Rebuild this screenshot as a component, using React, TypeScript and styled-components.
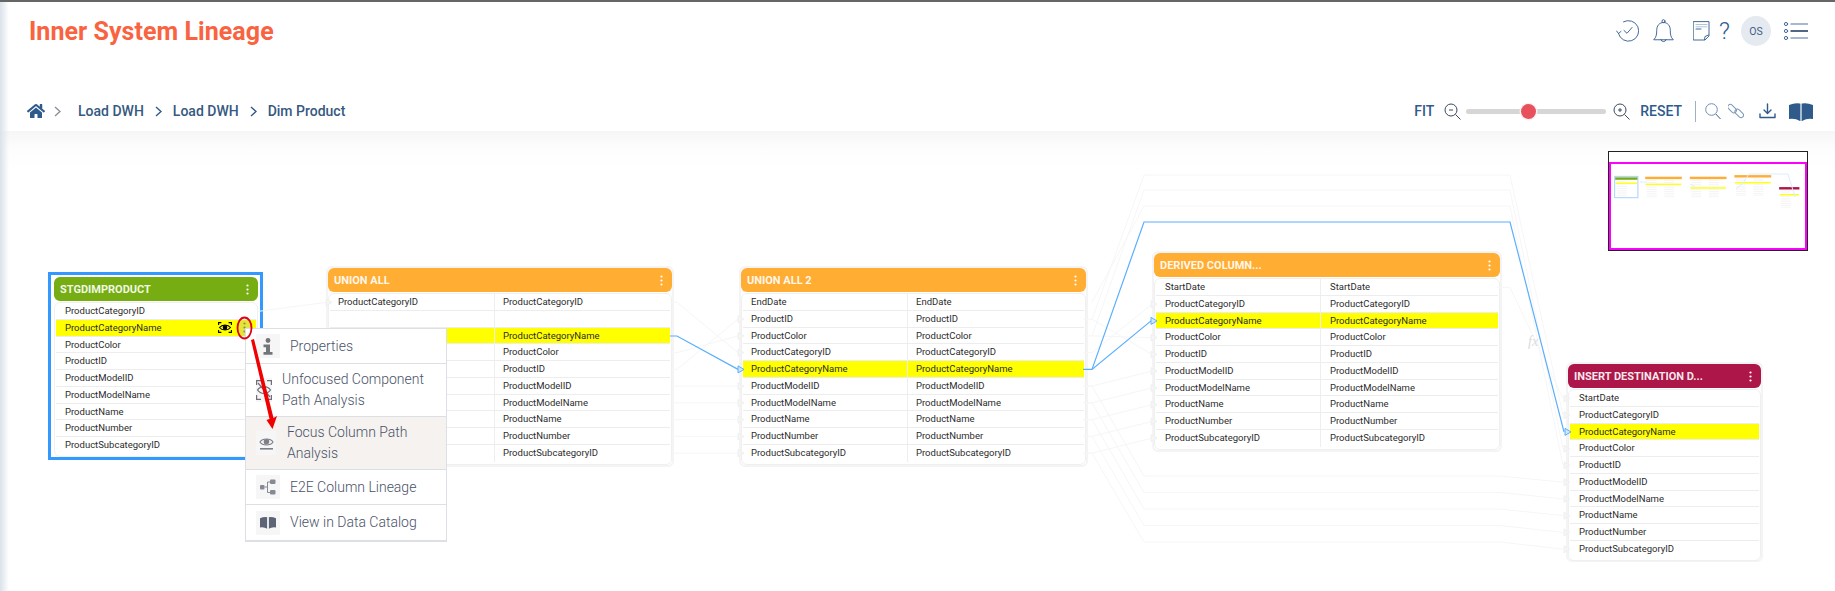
import React from "react";
import styled, { createGlobalStyle } from "styled-components";
import { FaHome } from "react-icons/fa";

const GlobalStyle = createGlobalStyle`
  html, body { margin: 0; padding: 0; background: #fff; }
  body { font-family: Roboto, "Liberation Sans", sans-serif; overflow: hidden; }
`;

const CANVAS_TOP = 131;
const ROW_H = 16.75;
const navy = "#2f5a8c";

const Page = styled.div`
  position: relative;
  width: 1835px;
  height: 591px;
  display: flex;
  flex-direction: column;
  border-top: 2px solid #666;
  box-sizing: border-box;
  overflow: hidden;
  &::after {
    content: "";
    position: absolute;
    left: 0;
    top: 0;
    bottom: 0;
    width: 9px;
    background: linear-gradient(90deg, #dbe2ea, rgba(240, 243, 247, 0));
    pointer-events: none;
  }
`;

const TopBar = styled.header`
  height: 73px;
  display: flex;
  justify-content: space-between;
  align-items: flex-start;
  padding: 15px 27px 0 29px;
  box-sizing: border-box;
`;

const Title = styled.h1`
  margin: 0;
  font-size: 25px;
  line-height: 30px;
  font-weight: 700;
  letter-spacing: 0.05px;
  color: #f9633f;
`;

const TopIcons = styled.div`
  display: flex;
  align-items: center;
  height: 30px;
  margin-top: -1px;
`;

const IconSlot = styled.span<{ $gap?: number }>`
  display: inline-flex;
  margin-left: ${({ $gap }) => $gap ?? 0}px;
`;

const Help = styled.span`
  margin-left: 9px;
  font-size: 24px;
  font-weight: 300;
  color: ${navy};
  width: 10px;
`;

const Avatar = styled.span`
  width: 30px;
  height: 30px;
  margin-left: 12px;
  border-radius: 50%;
  background: #e5e9f0;
  color: #3f5f85;
  font-size: 10.5px;
  display: flex;
  align-items: center;
  justify-content: center;
`;

const Toolbar = styled.div`
  height: 56px;
  display: flex;
  justify-content: space-between;
  align-items: center;
  padding: 16px 22px 0 27px;
  box-sizing: border-box;
  background: #fff;
`;

const Breadcrumb = styled.nav`
  display: flex;
  align-items: center;
`;

const Crumb = styled.span`
  font-size: 14px;
  font-weight: 500;
  color: #36597f;
  margin: 0 11px;
`;

const Controls = styled.div`
  display: flex;
  align-items: center;
`;

const TextButton = styled.span`
  font-size: 14px;
  font-weight: 500;
  color: ${navy};
`;

const Track = styled.div`
  position: relative;
  width: 140px;
  height: 5px;
  border-radius: 3px;
  background: #d6d6d6;
  margin: 0 7px 0 5px;
`;

const Knob = styled.span<{ $left: number }>`
  position: absolute;
  left: ${({ $left }) => $left}px;
  top: -5px;
  width: 15px;
  height: 15px;
  margin-left: -7.5px;
  border-radius: 50%;
  background: #e8505b;
  box-shadow: 0 0 0 1.5px #f4f4f4;
`;

const Separator = styled.span`
  width: 1px;
  height: 21px;
  margin: 0 9px 0 13px;
  background: #9fb0c4;
`;

const Canvas = styled.main`
  position: relative;
  flex: 1;
  background: linear-gradient(180deg, #f6f6f6 0, #fdfdfd 18px, #fff 40px);
`;

const Wires = styled.svg`
  position: absolute;
  left: 0;
  top: 0;
  width: 1835px;
  height: 460px;
  z-index: 2;
  pointer-events: none;
`;

const Notes = styled(Wires)`
  z-index: 5;
`;

const NodeBox = styled.section<{
  $x: number;
  $y: number;
  $w: number;
  $h: number;
  $selected?: boolean;
}>`
  position: absolute;
  left: ${({ $x }) => $x}px;
  top: ${({ $y }) => $y - CANVAS_TOP}px;
  width: ${({ $w }) => $w}px;
  height: ${({ $h }) => $h}px;
  box-sizing: border-box;
  z-index: 1;
  background: #fff;
  border-radius: ${({ $selected }) => ($selected ? 0 : 6)}px;
  border: ${({ $selected }) => ($selected ? "3px solid #3399ff" : "2px solid #f4f4f4")};
  padding: ${({ $selected }) => ($selected ? "2px 2px 0 3px" : "0")};
`;

const NodeHeader = styled.div<{ $color: string }>`
  height: 24px;
  padding: 0 9px 0 6px;
  border-radius: 6px;
  background: ${({ $color }) => $color};
  color: rgba(255, 255, 255, 0.92);
  font-size: 11px;
  font-weight: 700;
  display: flex;
  align-items: center;
  justify-content: space-between;
`;

const NodeBody = styled.div`
  margin-top: 1px;
  border: 1px solid #f0f0f0;
  border-radius: 6px;
  padding: 0 1px 2px;
`;

const Row = styled.div<{ $hl?: boolean; $split: boolean }>`
  height: ${ROW_H}px;
  box-sizing: border-box;
  display: grid;
  grid-template-columns: ${({ $split }) => ($split ? "164px 1fr" : "1fr")};
  align-items: center;
  position: relative;
  font-size: 9.5px;
  color: #2c2c2c;
  background: ${({ $hl }) => ($hl ? "#ffff00" : "transparent")};
  border-bottom: 1px solid #ededed;
  &:last-child {
    border-bottom: none;
  }
`;

const Cell = styled.span<{ $pad: number }>`
  padding-left: ${({ $pad }) => $pad}px;
  line-height: 16px;
  height: 100%;
  white-space: nowrap;
  & + & {
    border-left: 1px solid #eee;
  }
`;

const RowTools = styled.span`
  position: absolute;
  right: 5px;
  top: 0;
  height: 100%;
  display: flex;
  align-items: center;
  gap: 6px;
`;

const RowKebab = styled.span`
  width: 13px;
  height: 16px;
  background: #e4e43a;
  display: flex;
  align-items: center;
  justify-content: center;
`;

const Fx = styled.span`
  position: absolute;
  left: 1528px;
  top: ${334 - CANVAS_TOP}px;
  z-index: 2;
  font: italic 14px "Liberation Serif", serif;
  color: #dcdcdc;
`;

const Menu = styled.div`
  position: absolute;
  left: 245px;
  top: ${328 - CANVAS_TOP}px;
  width: 202px;
  box-sizing: border-box;
  z-index: 4;
  background: #fff;
  border: 1px solid #dcdfe4;
  border-bottom-width: 2px;
`;

const MenuItem = styled.div<{ $active?: boolean; $h: number; $textAt: number }>`
  height: ${({ $h }) => $h}px;
  box-sizing: border-box;
  display: flex;
  align-items: center;
  padding-left: 10px;
  background: ${({ $active }) => ($active ? "#f5f2ef" : "#fff")};
  border-bottom: 1px solid #dcdfe4;
  &:last-child {
    border-bottom: none;
  }
  & > span:last-child {
    margin-left: ${({ $textAt }) => $textAt}px;
  }
`;

const MenuIcon = styled.div<{ $w?: number }>`
  width: ${({ $w }) => $w ?? 24}px;
  height: 24px;
  flex: none;
  background: #f6f6f6;
  display: flex;
  align-items: center;
  justify-content: center;
`;

const MenuText = styled.span`
  font-size: 14px;
  line-height: 21px;
  font-weight: 300;
  color: #4a5268;
`;

const MiniMap = styled.div`
  position: absolute;
  left: 1608px;
  top: ${151 - CANVAS_TOP}px;
  width: 200px;
  height: 100px;
  box-sizing: border-box;
  border: 1px solid #222;
  background: #fff;
  z-index: 3;
`;

const Stroke = styled.svg`
  display: block;
  fill: none;
  stroke: ${navy};
  stroke-width: 0.9;
  stroke-linecap: round;
  stroke-linejoin: round;
`;

const n = {
  id: "ProductID",
  catId: "ProductCategoryID",
  cat: "ProductCategoryName",
  color: "ProductColor",
  modelId: "ProductModelID",
  modelName: "ProductModelName",
  name: "ProductName",
  num: "ProductNumber",
  sub: "ProductSubcategoryID",
  start: "StartDate",
  end: "EndDate",
};

const tail = [n.modelId, n.modelName, n.name, n.num, n.sub];

type NodeDef = {
  title: string;
  color: string;
  x: number;
  y: number;
  w: number;
  h: number;
  selected?: boolean;
  split: boolean;
  rows: string[];
  hl: number;
  pad: number;
  coveredFrom?: number; // left column rows that sit under the open menu
};

const nodes: NodeDef[] = [
  { title: "STGDIMPRODUCT", color: "#76ad12", x: 48, y: 272, w: 215, h: 188, selected: true, split: false, hl: 1, pad: 9, rows: [n.catId, n.cat, n.color, n.id, ...tail] },
  { title: "UNION ALL", color: "#ffad33", x: 326, y: 266, w: 348, h: 201, split: true, hl: 2, pad: 8, coveredFrom: 2, rows: [n.catId, "", n.cat, n.color, n.id, ...tail] },
  { title: "UNION ALL 2", color: "#ffad33", x: 739, y: 266, w: 349, h: 201, split: true, hl: 4, pad: 8, rows: [n.end, n.id, n.color, n.catId, n.cat, ...tail] },
  { title: "DERIVED COLUMN...", color: "#ffad33", x: 1152, y: 251, w: 350, h: 201, split: true, hl: 2, pad: 9, rows: [n.start, n.catId, n.cat, n.color, n.id, ...tail] },
  { title: "INSERT DESTINATION D...", color: "#ad1649", x: 1566, y: 362, w: 197, h: 200, split: false, hl: 2, pad: 9, rows: [n.start, n.catId, n.cat, n.color, n.id, ...tail] },
];

const y1 = (i: number) => 311.4 + ROW_H * i;
const y2 = (i: number) => 302.4 + ROW_H * i;
const y4 = (i: number) => 287.4 + ROW_H * i;
const y5 = (i: number) => 398.4 + ROW_H * i;

const faint: string[] = [
  `M258 ${y1(0)} L326 ${y2(0)}`,
  ...[[0, 3], [3, 2], [4, 1], [5, 5], [6, 6], [7, 7], [8, 8], [9, 9]].map(
    ([a, b]) => `M670 ${y2(a)} H677 L738 ${y2(b)}`
  ),
  ...[[3, 1], [2, 3], [1, 4], [5, 5], [6, 6], [7, 7], [8, 8], [9, 9]].map(
    ([a, b]) => `M1083 ${y2(a)} H1092 L1152 ${y4(b)}`
  ),
  `M1092 ${y2(1)} L1144 175 H1510 L1563 ${y5(1)}`,
  `M1092 ${y2(2)} L1144 190 H1510 L1563 ${y5(3)}`,
  `M1092 ${y2(0)} L1144 206 H1510 L1563 ${y5(4)}`,
  `M1497 ${y4(0)} H1510 L1563 ${y5(0)}`,
  ...[0, 1, 2, 3, 4].map(
    (k) => `M1083 ${y2(5 + k)} H1092 L1144 ${476 + 16.5 * k} H1500 L1563 ${y5(5 + k)}`
  ),
];

const faintArrows: [number, number][] = [
  [326, y2(0)],
  ...[1, 2, 3, 5, 6, 7, 8, 9].map((i): [number, number] => [738, y2(i)]),
  ...[1, 3, 4, 5, 6, 7, 8, 9].map((i): [number, number] => [1151, y4(i)]),
  ...[0, 1, 3, 4, 5, 6, 7, 8, 9].map((i): [number, number] => [1564, y5(i)]),
];

const blue: string[] = [
  `M670 336 H677 L738 ${y2(4)}`,
  `M1083 ${y2(4)} H1092 L1151 ${y4(2)}`,
  `M1092 ${y2(4)} L1144 222 H1510 L1564 ${y5(2)}`,
];

const Arrow = ({ x, y, color, fill }: { x: number; y: number; color: string; fill: string }) => (
  <path d={`M${x} ${y - 3.5} L${x + 6} ${y} L${x} ${y + 3.5} Z`} fill={fill} stroke={color} strokeWidth={1} />
);

const ConnectorLayer = () => (
  <Wires viewBox={`0 ${CANVAS_TOP} 1835 460`}>
    {faint.map((d) => (
      <path key={d} d={d} fill="none" stroke="#f6f6f6" strokeWidth={1} />
    ))}
    {faintArrows.map(([x, y]) => (
      <Arrow key={`${x}-${y}`} x={x} y={y} color="#f0f0f0" fill="#f5f5f5" />
    ))}
    {blue.map((d) => (
      <path key={d} d={d} fill="none" stroke="#5aaeff" strokeWidth={1.2} />
    ))}
    <Arrow x={738} y={y2(4)} color="#5aaeff" fill="#cfe6ff" />
    <Arrow x={1151} y={y4(2)} color="#5aaeff" fill="#cfe6ff" />
    <Arrow x={1565} y={y5(2)} color="#5aaeff" fill="#cfe6ff" />
  </Wires>
);

const Annotation = () => (
  <Notes viewBox={`0 ${CANVAS_TOP} 1835 460`}>
    <ellipse cx={244.5} cy={328} rx={7} ry={10.5} fill="none" stroke="#e3000f" strokeWidth={1.8} />
    <path d="M251 340 L254 339 L273.5 418 L277 416 L272.5 429 L266.5 420 L269.5 419 Z" fill="#f00000" />
  </Notes>
);

const Kebab = ({ color = "#fff" }: { color?: string }) => (
  <svg width="3" height="11" viewBox="0 0 3 11">
    <circle cx="1.5" cy="1.5" r="1.1" fill={color} />
    <circle cx="1.5" cy="5.5" r="1.1" fill={color} />
    <circle cx="1.5" cy="9.5" r="1.1" fill={color} />
  </svg>
);

const BracketEye = () => (
  <svg width="14" height="11" viewBox="0 0 14 11" fill="none" stroke="#000" strokeWidth="1.1">
    <path d="M.6 3V.6H3.4M10.6.6h2.8V3M13.4 8v2.4h-2.8M3.4 10.4H.6V8" />
    <path d="M1.5 5.5C4 2.3 10 2.3 12.5 5.5 10 8.7 4 8.7 1.5 5.5Z" />
    <circle cx="7" cy="5.5" r="1.7" fill="#000" />
  </svg>
);

const Node = ({ def }: { def: NodeDef }) => (
  <NodeBox $x={def.x} $y={def.y} $w={def.w} $h={def.h} $selected={def.selected}>
    <NodeHeader $color={def.color}>
      {def.title}
      <Kebab />
    </NodeHeader>
    <NodeBody>
      {def.rows.map((r, i) => (
        <Row key={i} $hl={i === def.hl} $split={def.split}>
          <Cell $pad={def.pad}>{def.coveredFrom !== undefined && i >= def.coveredFrom ? "" : r}</Cell>
          {def.split && <Cell $pad={def.pad}>{r}</Cell>}
          {def.selected && i === def.hl && (
            <RowTools>
              <BracketEye />
              <RowKebab>
                <Kebab color="#8d8f55" />
              </RowKebab>
            </RowTools>
          )}
        </Row>
      ))}
    </NodeBody>
  </NodeBox>
);

// overview drawing, same node data at 0.108 scale
const MiniOverview = () => {
  const s = 0.108;
  const sx = (x: number) => x * s + 0.5;
  const sy = (y: number) => y * s - 3.5;
  return (
    <svg width="198" height="98" viewBox="0 0 198 98">
      <g transform="translate(0 -1)">
        {nodes.map((d) => (
          <g key={d.title}>
            {d.selected && (
              <rect x={sx(d.x)} y={sy(d.y) - 0.5} width={d.w * s} height={d.h * s + 1} fill="none" stroke="#a9d1fb" strokeWidth={1} />
            )}
            <rect x={sx(d.x) + 0.5} y={sy(d.y) + 0.5} width={d.w * s - 1} height={2.4} fill={d.color} />
            {d.rows.map((_, i) =>
              i === d.hl ? (
                <rect key={i} x={sx(d.x) + 1} y={sy(d.y) + 3.8 + i * 1.8} width={d.w * s - 2} height={1.5} fill="#ffff1e" />
              ) : (
                <g key={i} fill="#f3f3f3">
                  <rect x={sx(d.x) + 2} y={sy(d.y) + 4 + i * 1.8} width={10} height={0.8} />
                  {d.split && <rect x={sx(d.x) + 19.5} y={sy(d.y) + 4 + i * 1.8} width={10} height={0.8} />}
                </g>
              )
            )}
          </g>
        ))}
        <path
          d="M31 31 L38 31 M81 33 L86 36 M127 38 L134 32 L140 23 L179 23 L186 46"
          fill="none"
          stroke="#dcecff"
          strokeWidth={1}
        />
      </g>
      <rect x="1" y="11" width="196" height="86" fill="none" stroke="#ff00ff" strokeWidth={2} />
    </svg>
  );
};

const ClockCheck = () => (
  <Stroke width="23" height="24" viewBox="0 0 23 24">
    <path d="M7.5 2.8A10.3 10.3 0 1 1 2.4 14.5" />
    <path d="M.6 12 2.5 14.5 5 12.4" />
    <path d="M8 11.5 11 14.3 16 8.5" />
  </Stroke>
);

const Bell = () => (
  <Stroke width="21" height="25" viewBox="0 0 21 25">
    <path d="M1 20.5C3.5 18 3.7 15 3.7 11.5 3.7 6.5 6.5 3.5 10.5 3.5S17.3 6.5 17.3 11.5C17.3 15 17.5 18 20 20.5Z" />
    <circle cx="10.5" cy="2.2" r="1.5" />
    <path d="M7.8 20.5a2.8 2.8 0 0 0 5.4 0" />
  </Stroke>
);

const Note = () => (
  <Stroke width="17" height="20" viewBox="0 0 17 20">
    <path d="M.6.6H16V15L12 19H.6Z" />
    <path d="M3 3.5H14M3 5.8H14" stroke="#a9bdd3" />
    <path d="M3 8H8" />
    <path d="M11.5 18.5 12 15.5 15.5 14" />
  </Stroke>
);

const ListIcon = () => (
  <Stroke width="24" height="20" viewBox="0 0 24 20">
    <circle cx="2" cy="3" r="1.6" />
    <circle cx="2" cy="10" r="1.6" />
    <circle cx="2" cy="17" r="1.6" />
    <path d="M7 3H24" stroke="#8aa3bf" strokeWidth="1.4" />
    <path d="M7 10H24" stroke="#17375e" strokeWidth="1.4" />
    <path d="M7 17H24" stroke="#8aa3bf" strokeWidth="1.4" />
  </Stroke>
);

const Chevron = ({ size = 1, color = navy }: { size?: number; color?: string }) => (
  <svg width={7 * size} height={11 * size} viewBox="0 0 7 11" fill="none" stroke={color} strokeWidth="1.4">
    <path d="M1 1 6 5.5 1 10" />
  </svg>
);

const ZoomIcon = ({ plus }: { plus?: boolean }) => (
  <svg width="17" height="17" viewBox="0 0 17 17" fill="none" stroke="#3c4a5c" strokeWidth="1">
    <circle cx="7" cy="7" r="6" />
    <path d="M11.5 11.5 16.5 16.5" />
    <path d="M5 7H9" />
    {plus && <path d="M7 5V9" />}
  </svg>
);

const Loupe = () => (
  <svg width="16" height="17" viewBox="0 0 16 17" fill="none" stroke="#6f8fb3" strokeWidth="1">
    <circle cx="6.5" cy="6.5" r="5.8" />
    <path d="M10.8 11 15.5 16" stroke="#3c5a7d" />
  </svg>
);

const LinkIcon = () => (
  <svg width="16" height="16" viewBox="0 0 16 16" fill="none" stroke="#7c98b8" strokeWidth="1">
    <rect x="-1.2" y="3.2" width="10" height="5" rx="2.5" transform="rotate(45 4 6)" />
    <rect x="6.4" y="7.6" width="10" height="5" rx="2.5" transform="rotate(45 11 10)" />
  </svg>
);

const Download = () => (
  <Stroke width="17" height="16" viewBox="0 0 17 16" style={{ strokeWidth: 1.4 }}>
    <path d="M8.5 1V10M5 7l3.5 3.5L12 7" />
    <path d="M1 11V14.5H16V11" />
  </Stroke>
);

const BookIcon = ({ w = 24, h = 19, color = navy, gap = "#a9bbd0" }: { w?: number; h?: number; color?: string; gap?: string }) => (
  <svg width={w} height={h} viewBox="0 0 24 19" fill={color}>
    <path d="M0 3Q6 .6 11 1.6V19Q6 16 0 17Z" />
    <path d="M24 3Q18 .6 13 1.6V19Q18 16 24 17Z" />
    <rect x="11" y="1.6" width="2" height="17.4" fill={gap} />
  </svg>
);

const InfoIcon = () => (
  <svg width="12" height="17" viewBox="0 0 12 17" fill="#73757a">
    <circle cx="6" cy="2.5" r="2.4" />
    <path d="M1.5 6.5H8V14H10.5V16.8H1.5V14H4V9.2H1.5Z" />
  </svg>
);

const UnfocusIcon = () => (
  <svg width="16" height="20" viewBox="0 0 16 20" fill="none" stroke="#6d7078" strokeWidth="1.2">
    <path d="M.6 5V.6H5M11 .6h4.4V5M15.4 15v4.4H11M5 19.4H.6V15" />
    <path d="M1.5 10C4.5 5.5 11.5 5.5 14.5 10 11.5 14.5 4.5 14.5 1.5 10Z" />
    <path d="M2 3 14 17" />
  </svg>
);

const EyeLine = () => (
  <svg width="15" height="13" viewBox="0 0 15 13" fill="none" stroke="#7d8087" strokeWidth="1.2">
    <path d="M1 5C3.5 1 11.5 1 14 5 11.5 9 3.5 9 1 5Z" />
    <circle cx="7.5" cy="4.8" r="2.2" fill="#7d8087" />
    <path d="M1 11.8H14" strokeWidth="1.6" />
  </svg>
);

const TreeIcon = () => (
  <svg width="16" height="16" viewBox="0 0 16 16" fill="#868a93">
    <rect x="0" y="6" width="4.5" height="4.5" rx="1" />
    <rect x="10" y="0.5" width="5.5" height="4.5" rx="1" />
    <rect x="10" y="11" width="5.5" height="4.5" rx="1" />
    <path d="M4.5 8H7.5M7.5 3V13.5M7.5 3H10M7.5 13.5H10" stroke="#868a93" fill="none" />
  </svg>
);

export default function App() {
  return (
    <>
      <GlobalStyle />
      <Page>
        <TopBar>
          <Title>Inner System Lineage</Title>
          <TopIcons>
            <ClockCheck />
            <IconSlot $gap={14}><Bell /></IconSlot>
            <IconSlot $gap={19}><Note /></IconSlot>
            <Help>?</Help>
            <Avatar>OS</Avatar>
            <IconSlot $gap={13}><ListIcon /></IconSlot>
          </TopIcons>
        </TopBar>
        <Toolbar>
          <Breadcrumb>
            <FaHome size={18} color={navy} />
            <IconSlot $gap={9}><Chevron color="#8a8f98" /></IconSlot>
            <IconSlot $gap={6} />
            <Crumb>Load DWH</Crumb>
            <Chevron />
            <Crumb>Load DWH</Crumb>
            <Chevron />
            <Crumb>Dim Product</Crumb>
          </Breadcrumb>
          <Controls>
            <TextButton>FIT</TextButton>
            <IconSlot $gap={10}><ZoomIcon /></IconSlot>
            <Track><Knob $left={62} /></Track>
            <ZoomIcon plus />
            <IconSlot $gap={10}><TextButton>RESET</TextButton></IconSlot>
            <Separator />
            <Loupe />
            <IconSlot $gap={7}><LinkIcon /></IconSlot>
            <IconSlot $gap={15}><Download /></IconSlot>
            <IconSlot $gap={13}><BookIcon /></IconSlot>
          </Controls>
        </Toolbar>
        <Canvas>
          {nodes.map((d) => (
            <Node key={d.title} def={d} />
          ))}
          <ConnectorLayer />
          <Fx>fx</Fx>
          <Menu>
            <MenuItem $h={35} $textAt={10}>
              <MenuIcon><InfoIcon /></MenuIcon>
              <MenuText>Properties</MenuText>
            </MenuItem>
            <MenuItem $h={53} $textAt={10}>
              <MenuIcon $w={16}><UnfocusIcon /></MenuIcon>
              <MenuText>Unfocused Component<br />Path Analysis</MenuText>
            </MenuItem>
            <MenuItem $active $h={53} $textAt={11}>
              <MenuIcon $w={20}><EyeLine /></MenuIcon>
              <MenuText>Focus Column Path<br />Analysis</MenuText>
            </MenuItem>
            <MenuItem $h={35} $textAt={10}>
              <MenuIcon><TreeIcon /></MenuIcon>
              <MenuText>E2E Column Lineage</MenuText>
            </MenuItem>
            <MenuItem $h={35} $textAt={10}>
              <MenuIcon><BookIcon w={16} h={13} color="#5e6478" gap="#f6f6f6" /></MenuIcon>
              <MenuText>View in Data Catalog</MenuText>
            </MenuItem>
          </Menu>
          <Annotation />
          <MiniMap><MiniOverview /></MiniMap>
        </Canvas>
      </Page>
    </>
  );
}
